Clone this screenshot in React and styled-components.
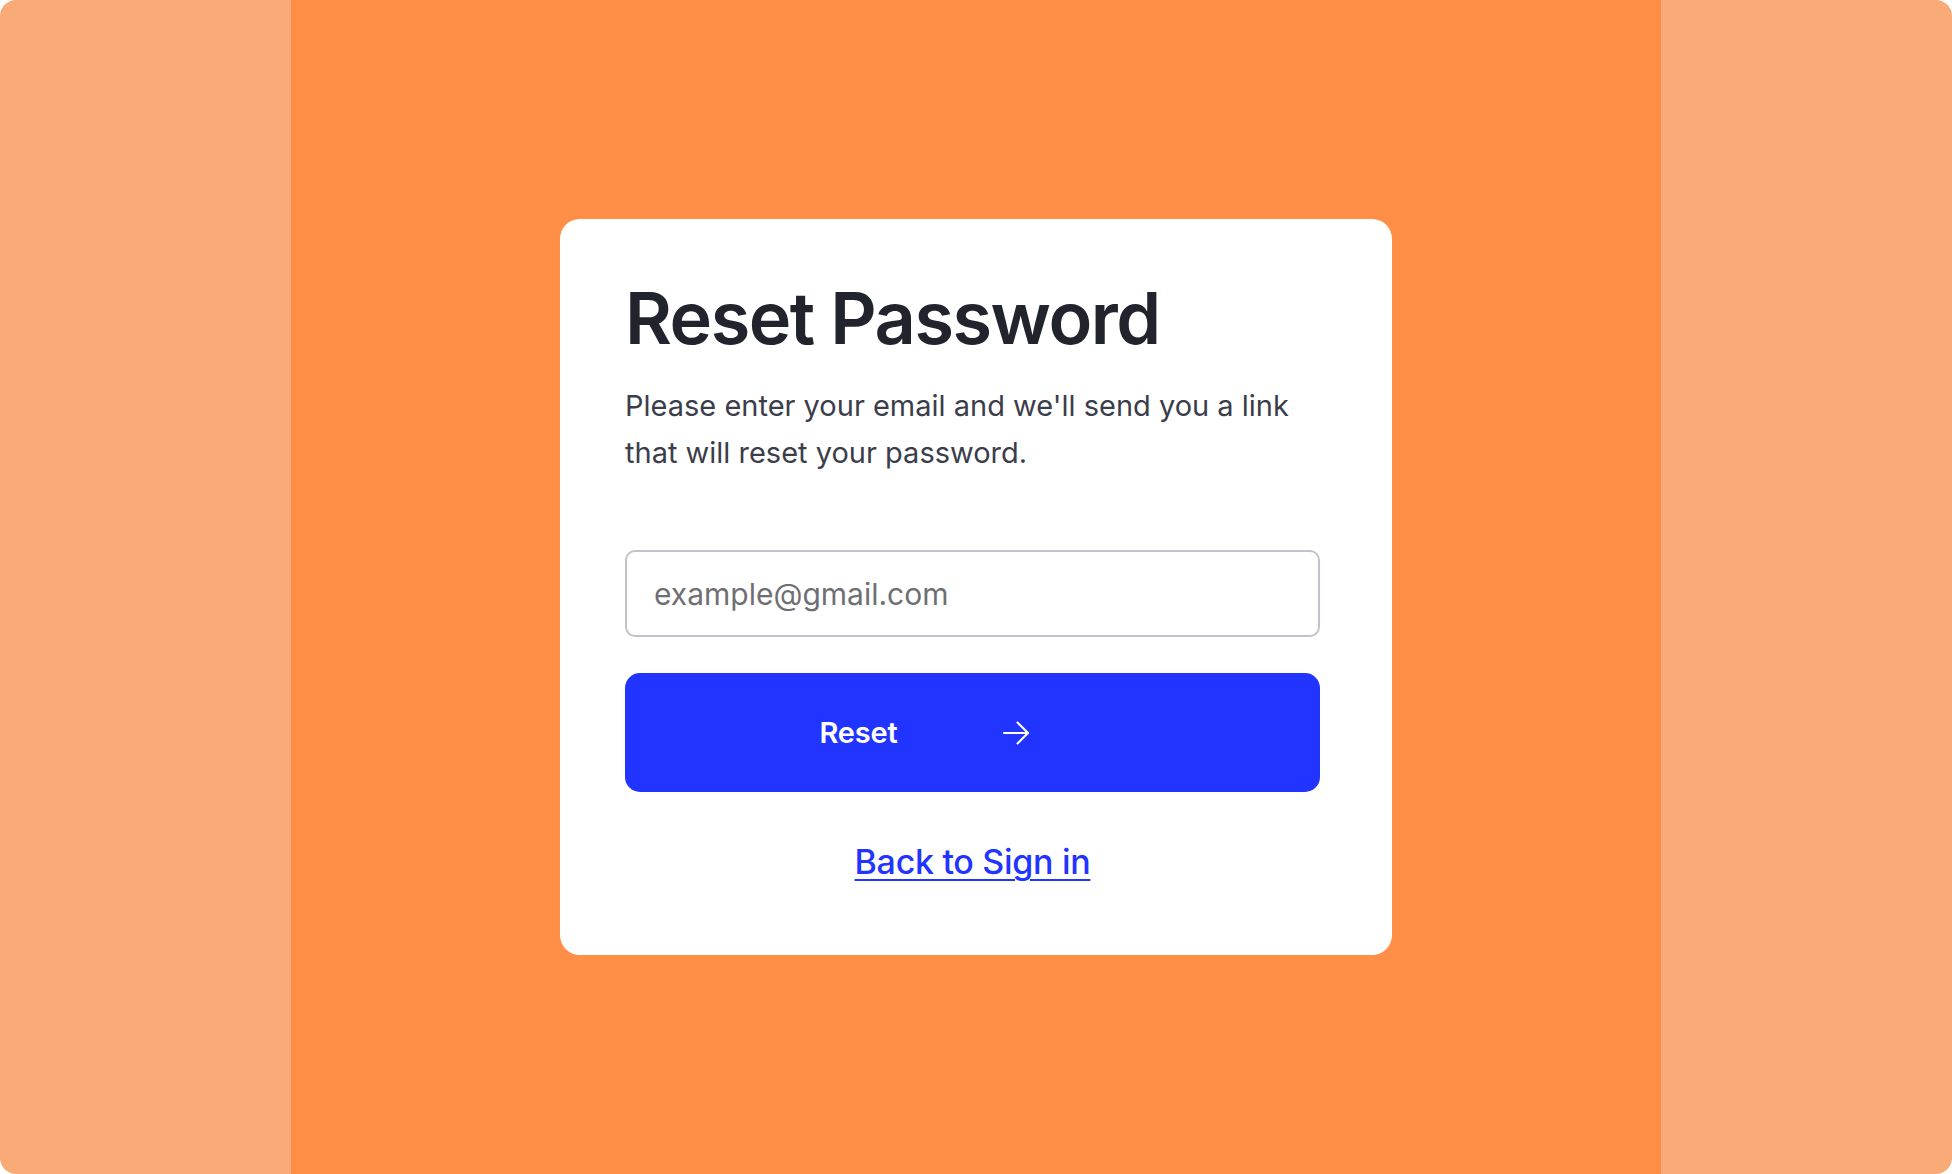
import React from 'react';
import styled, { createGlobalStyle } from 'styled-components';

const GlobalStyle = createGlobalStyle`
    html, body {
        margin: 0;
        padding: 0;
        background: #ffffff;
    }
    body {
        font-family: Inter, "Noto Sans", "Liberation Sans", sans-serif;
    }
    * {
        box-sizing: border-box;
    }
`;

const Frame = styled.div`
    width: 1952px;
    height: 1174px;
    border-radius: 16px;
    overflow: hidden;
    display: grid;
    grid-template-columns: 291px 1fr 291px;
`;

const SidePanel = styled.div`
    background: #faaa77;
`;

const Stage = styled.main`
    background: #ff8f47;
    display: flex;
    align-items: center;
    justify-content: center;
`;

const Card = styled.section`
    width: 832px;
    background: #ffffff;
    border-radius: 20px;
    padding: 56px 72px 72px 65px;
    display: flex;
    flex-direction: column;
`;

const Title = styled.h1`
    margin: 0;
    font-size: 72px;
    line-height: 1.2;
    font-weight: 600;
    letter-spacing: -1.5px;
    color: #21242c;
`;

const Lead = styled.p`
    margin: 21px 0 0;
    font-size: 29px;
    line-height: 47px;
    font-weight: 400;
    color: #3b3e4a;
`;

const EmailInput = styled.input`
    margin-top: 74px;
    height: 87px;
    width: 100%;
    border: 2px solid #c1c3ca;
    border-radius: 10px;
    padding: 0 27px;
    font-family: inherit;
    font-size: 30px;
    color: #21242c;
    outline: none;

    &::placeholder {
        color: #6f6f73;
    }
`;

const ResetButton = styled.button`
    margin-top: 36px;
    height: 119px;
    width: 100%;
    border: none;
    border-radius: 15px;
    background: #2234ff;
    color: #ffffff;
    font-family: inherit;
    font-size: 29px;
    font-weight: 600;
    letter-spacing: -0.2px;
    display: flex;
    align-items: center;
    justify-content: center;
    gap: 100px;
    padding: 0 92px 0 0;
    cursor: pointer;
`;

const BackLink = styled.a`
    margin-top: 50px;
    align-self: center;
    font-size: 34px;
    line-height: 1.2;
    font-weight: 500;
    letter-spacing: -0.3px;
    color: #2234ff;
    text-decoration: underline;
    text-underline-offset: 5px;
    text-decoration-thickness: 2px;
`;

const Arrow = () => (
    <svg width="36" height="36" viewBox="0 0 24 24" fill="none" stroke="currentColor" strokeWidth="1.4" strokeLinecap="round" strokeLinejoin="round">
        <path d="M4 12h16" />
        <path d="M13 5l7 7-7 7" />
    </svg>
);

export default function App() {
    return (
        <>
            <GlobalStyle />
            <Frame>
                <SidePanel />
                <Stage>
                    <Card>
                        <Title>Reset Password</Title>
                        <Lead>
                            Please enter your email and we'll send you a link
                            <br />
                            that will reset your password.
                        </Lead>
                        <EmailInput type="email" placeholder="example@gmail.com" />
                        <ResetButton>
                            <span>Reset</span>
                            <Arrow />
                        </ResetButton>
                        <BackLink href="#">Back to Sign in</BackLink>
                    </Card>
                </Stage>
                <SidePanel />
            </Frame>
        </>
    );
}
